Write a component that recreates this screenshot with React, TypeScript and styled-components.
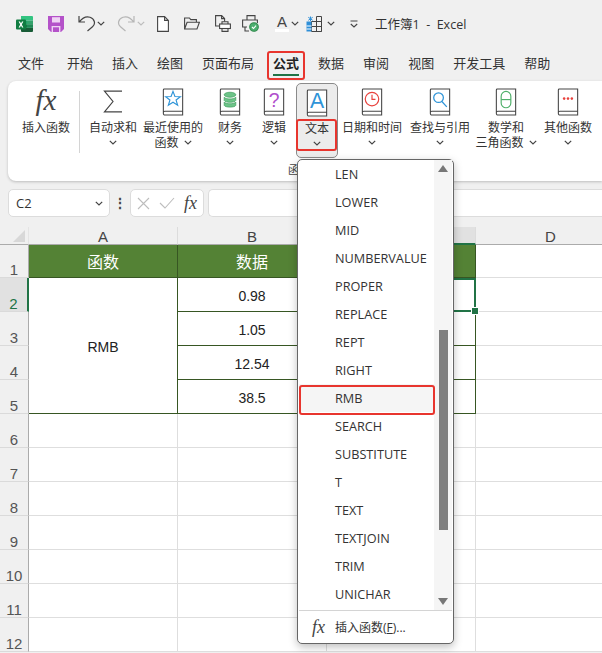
import React from 'react'
import styled, { createGlobalStyle } from 'styled-components'

const UI = `"Open Sans", "Noto Sans CJK SC", sans-serif`

const GlobalStyle = createGlobalStyle`
  html, body { margin: 0; padding: 0; background: #f0f0f0; }
  * { box-sizing: border-box; }
`

const Chevron = ({ color = '#444' }: { color?: string }) => (
	<svg width="8" height="5" viewBox="0 0 8 5" fill="none" stroke={color} strokeWidth="1.2"><path d="M.8.8 4 4 7.2.8" /></svg>
)

const Book = ({ children }: { children: React.ReactNode }) => (
	<svg width="22" height="28" viewBox="0 0 22 29" fill="none">
		<path d="M1 25.5V2a1 1 0 0 1 1-1h19v27H2.5A1.5 1.5 0 0 1 1 26.5v-1A1.5 1.5 0 0 1 2.5 24H21" fill="#fff" stroke="#444" strokeWidth="1.1" />
		{children}
	</svg>
)

const tabs = ['文件', '开始', '插入', '绘图', '页面布局', '公式', '数据', '审阅', '视图', '开发工具', '帮助']

const ribbonItems: { icon: React.ReactNode; width: number; lines: string[]; chevronInline?: boolean }[] = [
	{
		width: 58,
		lines: ['自动求和'],
		icon: <svg width="20" height="27" viewBox="0 -2 22 30" fill="none" stroke="#444" strokeWidth="1.3"><path d="M21 1.5H1.5L11 13 1.5 24.5H21" /></svg>,
	},
	{
		width: 62,
		lines: ['最近使用的', '函数'],
		chevronInline: true,
		icon: <Book><path d="M11 3.500l2 5.300 5.600.2-4.400 3.500 1.600 5.400-4.800-3.100-4.800 3.100 1.600-5.400L3.400 9l5.600-.2z" stroke="#2e94d8" strokeWidth="1.2" /></Book>,
	},
	{
		width: 52,
		lines: ['财务'],
		icon: <Book><g fill="#6cc488" stroke="#3b9a5a" strokeWidth=".7"><ellipse cx="11" cy="7" rx="6" ry="2.6" /><path d="M5 9.5c1 2.4 11 2.4 12 0V13c-1 2.4-11 2.4-12 0z" /><path d="M5 14.5c1 2.4 11 2.4 12 0V18c-1 2.4-11 2.4-12 0z" /></g></Book>,
	},
	{
		width: 36,
		lines: ['逻辑'],
		icon: <Book><text x="11" y="20" textAnchor="middle" fontSize="20" fontFamily="Liberation Sans, sans-serif" fill="#b04fcc">?</text></Book>,
	},
]

const ribbonItemsRight: typeof ribbonItems = [
	{
		width: 68,
		lines: ['日期和时间'],
		icon: <Book><g stroke="#e8413c" strokeWidth="1.2"><circle cx="11" cy="11.5" r="7" /><path d="M11 7v4.7h3.6" /></g></Book>,
	},
	{
		width: 68,
		lines: ['查找与引用'],
		icon: <Book><g stroke="#2e94d8" strokeWidth="1.3"><circle cx="9.5" cy="10" r="5" /><path d="M13 14l5 5.5" /></g></Book>,
	},
	{
		width: 64,
		lines: ['数学和', '三角函数'],
		chevronInline: true,
		icon: <Book><g stroke="#4fb06a" strokeWidth="1.2"><rect x="6" y="3.5" width="10" height="17" rx="5" /><path d="M6 12h10" /></g></Book>,
	},
	{
		width: 60,
		lines: ['其他函数'],
		icon: <Book><g fill="#e8413c"><circle cx="7" cy="11" r="1.3" /><circle cx="11" cy="11" r="1.3" /><circle cx="15" cy="11" r="1.3" /></g></Book>,
	},
]

const functions = ['LEN', 'LOWER', 'MID', 'NUMBERVALUE', 'PROPER', 'REPLACE', 'REPT', 'RIGHT', 'RMB', 'SEARCH', 'SUBSTITUTE', 'T', 'TEXT', 'TEXTJOIN', 'TRIM', 'UNICHAR']

const values = ['0.98', '1.05', '12.54', '38.5']

const RibbonButton = ({ item }: { item: (typeof ribbonItems)[number] }) => (
	<ToolButton $width={item.width}>
		<IconBox>{item.icon}</IconBox>
		{item.lines.map((line, i) => (
			<ToolLabel key={line}>
				{line}
				{item.chevronInline && i === 1 && <InlineChevron><Chevron /></InlineChevron>}
			</ToolLabel>
		))}
		{!item.chevronInline && <ChevronRow><Chevron /></ChevronRow>}
	</ToolButton>
)

const App = () => {
	return (
		<Page>
			<GlobalStyle />
			<TitleBar>
				<Slot $left={16} $width={17}>
					<svg width="17" height="16" viewBox="0 0 17 16">
						<path d="M5 0h11a1 1 0 0 1 1 1v3.5H5z" fill="#33c481" />
						<path d="M5 4.5h6v3.7H5z" fill="#21a366" />
						<path d="M11 4.5h6v3.7h-6z" fill="#33a36c" />
						<path d="M5 8.2h6v3.7H5z" fill="#107c41" />
						<path d="M11 8.2h6v3.7h-6z" fill="#1f8a55" />
						<path d="M5 11.9h12V15a1 1 0 0 1-1 1H6a1 1 0 0 1-1-1z" fill="#185c37" />
						<rect y="3.5" width="10" height="10" rx="1" fill="#107c41" />
						<path d="M2.6 5.5h1.4L5 7.4l1-1.9h1.4L5.8 8.5l1.6 3H6L5 9.5l-1 2H2.6l1.6-3z" fill="#fff" />
					</svg>
				</Slot>
				<Slot $left={15} $width={16}>
					<svg width="16" height="16" viewBox="0 0 16 16">
						<path d="M0 0h16v13l-3 3H3l-3-3z" fill="#b452c9" />
						<path d="M4 1.2h8v5.3H4z" fill="#efd3f4" />
						<path d="M3.6 10h8.8v6H3.6z" fill="#efd3f4" />
						<path d="M5 11.3h6v4.7H5z" fill="#b452c9" />
					</svg>
				</Slot>
				<Slot $left={14} $width={18}>
					<svg width="18" height="17" viewBox="0 0 18 17" fill="none" stroke="#444" strokeWidth="1.2"><path d="M1 1v6h6M1.3 6.8C4 3.4 8 1 12 2.3c4.6 1.6 6 6.500 2.500 9.500L9.500 16" /></svg>
				</Slot>
				<Slot $left={1} $width={8}><Chevron /></Slot>
				<Slot $left={12} $width={18}>
					<svg width="18" height="17" viewBox="0 0 18 17" fill="none" stroke="#b5b5b5" strokeWidth="1.2"><path d="M17 1v6h-6M16.700 6.800C14 3.400 10 1 6 2.300 1.400 3.900 0 8.800 3.500 11.800L8.500 16" /></svg>
				</Slot>
				<Slot $left={2} $width={8}><Chevron color="#bdbdbd" /></Slot>
				<Slot $left={12} $width={12}>
					<svg width="12" height="16" viewBox="0 0 12 16" fill="#fff" stroke="#444" strokeWidth="1.1"><path d="M.6.6h7l3.800 3.800v11H.6z M7.600.6v3.800h3.800" /></svg>
				</Slot>
				<Slot $left={15} $width={16}>
					<svg width="16" height="13" viewBox="0 0 16 13" fill="none" stroke="#444" strokeWidth="1.1"><path d="M.6 12V1h4.800l1.400 1.600h5.600v2.600M.6 12l2.500-6.800h12.300L13 12z" /></svg>
				</Slot>
				<Slot $left={15} $width={16}>
					<svg width="16" height="17" viewBox="0 0 16 17" fill="none" stroke="#444" strokeWidth="1.1"><path d="M4 11H.6V.6h6l3 3v3" /><path d="M6.600.6v3h3" /><rect x="4.600" y="9" width="10.800" height="4.500" fill="#fff" /><path d="M7 9V6.800h6V9M7 13v3.400h6V13" /></svg>
				</Slot>
				<Slot $left={11} $width={17}>
					<svg width="17" height="17" viewBox="0 0 17 17" fill="none" stroke="#444" strokeWidth="1.1"><path d="M5 5V.6h8V5" /><path d="M5 12H.6V5h14.800v3" /><path d="M3 12v4h4" /><circle cx="12" cy="12" r="4.300" fill="#4caf6f" stroke="#2f8a4c" /><path d="M10 12l1.500 1.500 2.500-2.800" stroke="#fff" /></svg>
				</Slot>
				<Slot $left={16} $width={14}>
					<FontSwatch>A</FontSwatch>
				</Slot>
				<Slot $left={2} $width={8}><Chevron /></Slot>
				<Slot $left={7} $width={16}>
					<svg width="16" height="16" viewBox="0 0 16 16">
						<g fill="none" stroke="#444" strokeWidth="1"><path d="M5.500 5.500h10v10h-10zM10.500 .5h5v15M10.500 .5v15M5.500 10.500h10" /></g>
						<path d="M.5 5.500h5v10h-5z" fill="#2e8fd8" />
						<path d="M.5 10h5M.5 13h5" stroke="#fff" />
						<path d="M4.500 .5v4.500M2.300 1.300 6.700 4.300M6.700 1.300 2.300 4.300" stroke="#2e8fd8" strokeWidth="1" />
					</svg>
				</Slot>
				<Slot $left={5} $width={8}><Chevron /></Slot>
				<Slot $left={15} $width={8}>
					<svg width="8" height="8" viewBox="0 0 8 8" fill="none" stroke="#444" strokeWidth="1.1"><path d="M.5 1h7M.8 4 4 7 7.200 4" /></svg>
				</Slot>
				<Title>工作簿1&nbsp; -&nbsp; Excel</Title>
			</TitleBar>

			<TabBar>
				{tabs.map((tab) => (
					<Tab key={tab} $active={tab === '公式'}>{tab}</Tab>
				))}
			</TabBar>

			<Ribbon>
				<ToolRow>
					<ToolButton $width={60}>
						<FxIcon>fx</FxIcon>
						<ToolLabel>插入函数</ToolLabel>
					</ToolButton>
					<RibbonDivider />
					{ribbonItems.map((item) => <RibbonButton key={item.lines[0]} item={item} />)}
					<TextButton>
						<IconBox>
							<Book><text x="11" y="19.500" textAnchor="middle" fontSize="22" fontFamily="Liberation Sans, sans-serif" fill="#2e94d8">A</text></Book>
						</IconBox>
						<ToolLabel>文本</ToolLabel>
						<ChevronRow><Chevron /></ChevronRow>
						<TextButtonFrame />
					</TextButton>
					{ribbonItemsRight.map((item) => <RibbonButton key={item.lines[0]} item={item} />)}
				</ToolRow>
				<GroupLabel>函数库</GroupLabel>
			</Ribbon>

			<FormulaBar>
				<NameBox>C2<Chevron /></NameBox>
				<Grip>⋮</Grip>
				<FormulaActions>
					<svg width="13" height="13" viewBox="0 0 13 13" fill="none" stroke="#bdbdbd" strokeWidth="1.100"><path d="M1 1l11 11M12 1L1 12" /></svg>
					<svg width="16" height="12" viewBox="0 0 16 12" fill="none" stroke="#bdbdbd" strokeWidth="1.100"><path d="M1 6l5 5L15 1" /></svg>
					<SmallFx>fx</SmallFx>
				</FormulaActions>
				<FormulaInput />
			</FormulaBar>

			<Sheet>
				<Corner><CornerMark /></Corner>
				<ColumnHead>A</ColumnHead>
				<ColumnHead>B</ColumnHead>
				<ColumnHead $active />
				<ColumnHead $last>D</ColumnHead>

				<RowHead>1</RowHead>
				<HeadCell>函数</HeadCell>
				<HeadCell>数据</HeadCell>
				<HeadCell />
				<BlankCell $last />

				<RowHead $active>2</RowHead>
				<MergedCell>RMB</MergedCell>
				<DataCell>{values[0]}</DataCell>
				<SelectedCell><FillHandle /></SelectedCell>
				<BlankCell $last />

				{values.slice(1).map((value, i) => (
					<React.Fragment key={value}>
						<RowHead style={{ gridRow: i + 4 }}>{i + 3}</RowHead>
						<DataCell>{value}</DataCell>
						<DataCell />
						<BlankCell $last />
					</React.Fragment>
				))}

				{[6, 7, 8, 9, 10, 11, 12].map((row) => (
					<React.Fragment key={row}>
						<RowHead>{row}</RowHead>
						<BlankCell />
						<BlankCell />
						<BlankCell />
						<BlankCell $last />
					</React.Fragment>
				))}
			</Sheet>

			<Menu>
				<MenuBody>
					<MenuList>
						{functions.map((name) => (
							<MenuItem key={name} $selected={name === 'RMB'}>{name}</MenuItem>
						))}
					</MenuList>
					<Scrollbar>
						<ScrollArrow $up />
						<ScrollThumb />
						<ScrollArrow />
					</Scrollbar>
				</MenuBody>
				<MenuFooter>
					<FooterFx>fx</FooterFx>
					<span>插入函数(<u>F</u>)...</span>
				</MenuFooter>
			</Menu>
		</Page>
	)
}

const Page = styled.div`
  position: relative;
  width: 602px;
  height: 653px;
  overflow: hidden;
  background: #f0f0f0;
  font-family: ${UI};
  color: #333;
`

const TitleBar = styled.div`
  height: 47px;
  display: flex;
  align-items: center;
`

const Slot = styled.div<{ $left: number; $width: number }>`
  width: ${props => props.$width}px;
  margin-left: ${props => props.$left}px;
  flex-shrink: 0;
  display: flex;
  align-items: center;
  justify-content: center;
`

const FontSwatch = styled.div`
  width: 14px;
  height: 17px;
  font: 15px/14px "Liberation Sans", sans-serif;
  color: #444;
  text-align: center;
  border-bottom: 3px solid #fff;
`

const Title = styled.div`
  margin-left: 17px;
  font-size: 12.5px;
  white-space: nowrap;
  color: #333;
`

const TabBar = styled.div`
  height: 34px;
  display: flex;
  gap: 19px;
  padding-left: 18px;
`

const Tab = styled.div<{ $active?: boolean }>`
  position: relative;
  font-size: 13px;
  line-height: 32px;
  font-weight: ${props => (props.$active ? 700 : 400)};
  color: ${props => (props.$active ? '#222' : '#333')};

  &:first-child {
    margin-right: 4px;
  }

  ${props => props.$active && `
    &::before {
      content: '';
      position: absolute;
      left: 0;
      right: 0;
      bottom: 5px;
      height: 2px;
      background: #217346;
    }
    &::after {
      content: '';
      position: absolute;
      left: -6px;
      right: -6px;
      top: 4px;
      bottom: 1px;
      border: 2px solid #e8352e;
      border-radius: 3px;
    }
  `}
`

const Ribbon = styled.div`
  height: 100px;
  margin-left: 8px;
  background: #fff;
  border-radius: 8px 0 0 8px;
  box-shadow: 0 1px 3px rgba(0, 0, 0, 0.22);
  padding: 2px 0 0 8px;
  display: flex;
  flex-direction: column;
`

const ToolRow = styled.div`
  display: flex;
  align-items: flex-start;
  height: 80px;
`

const ToolButton = styled.div<{ $width: number }>`
  width: ${props => props.$width}px;
  flex-shrink: 0;
  display: flex;
  flex-direction: column;
  align-items: center;
`

const IconBox = styled.div`
  height: 37px;
  padding-top: 5px;
  display: flex;
  align-items: flex-start;
  justify-content: center;
`

const FxIcon = styled.div`
  height: 37px;
  padding-top: 2px;
  font: italic 29px/30px "Liberation Serif", serif;
  color: #444;
`

const ToolLabel = styled.div`
  font-size: 12px;
  line-height: 15px;
  height: 15px;
  white-space: nowrap;
  color: #333;
`

const ChevronRow = styled.div`
  height: 14px;
  display: flex;
  align-items: center;
  justify-content: center;
`

const InlineChevron = styled.span`
  display: inline-block;
  margin-left: 5px;
  line-height: 0;
  vertical-align: 2px;
`

const RibbonDivider = styled.div`
  width: 1px;
  height: 62px;
  margin: 8px 4px 0 3px;
  background: #d4d4d4;
`

const TextButton = styled.div`
  position: relative;
  width: 42px;
  height: 75px;
  margin: 0 0 0 4px;
  flex-shrink: 0;
  display: flex;
  flex-direction: column;
  align-items: center;
  background: #ececec;
  border: 1px solid #8a8a8a;
  border-radius: 5px;
`

const TextButtonFrame = styled.div`
  position: absolute;
  left: -1px;
  top: 35px;
  width: 41px;
  height: 32px;
  border: 2px solid #e8352e;
  border-radius: 3px;
`

const GroupLabel = styled.div`
  font-size: 11px;
  line-height: 13px;
  padding-left: 272px;
  color: #444;
`

const FormulaBar = styled.div`
  height: 28px;
  margin: 8px 0 10px 8px;
  display: flex;
  align-items: stretch;
`

const NameBox = styled.div`
  width: 102px;
  background: #fff;
  border: 1px solid #dcdcdc;
  border-radius: 5px;
  padding: 0 6px 0 7px;
  display: flex;
  align-items: center;
  justify-content: space-between;
  font-size: 13px;
  color: #333;
`

const Grip = styled.div`
  width: 20px;
  text-align: center;
  line-height: 27px;
  font-size: 14px;
  font-weight: 700;
  color: #444;
`

const FormulaActions = styled.div`
  width: 74px;
  background: #fff;
  border: 1px solid #dcdcdc;
  border-radius: 5px;
  display: flex;
  align-items: center;
  gap: 9px;
  padding-left: 6px;
`

const SmallFx = styled.span`
  font: italic 18px/20px "Liberation Serif", serif;
  color: #444;
`

const FormulaInput = styled.div`
  flex: 1;
  margin-left: 4px;
  background: #fff;
  border: 1px solid #dcdcdc;
  border-right: 0;
  border-radius: 5px 0 0 5px;
`

const Sheet = styled.div`
  display: grid;
  grid-template-columns: 29px 149px 149px 149px 150px;
  grid-template-rows: 18px 33px repeat(11, 34px);
  font-size: 12px;
  background: #fff;
`

const Corner = styled.div`
  background: #f0f0f0;
  border-right: 1px solid #e4e4e4;
  border-bottom: 1px solid #ababab;
  position: relative;
`

const CornerMark = styled.div`
  position: absolute;
  right: 3px;
  bottom: 2px;
  width: 12px;
  height: 12px;
  background: #d8d8d8;
  clip-path: polygon(100% 0, 100% 100%, 0 100%);
`

const ColumnHead = styled.div<{ $active?: boolean; $last?: boolean }>`
  background: ${props => (props.$active ? '#e1e1e1' : '#f0f0f0')};
  border-right: 1px solid ${props => (props.$last ? 'transparent' : '#dcdcdc')};
  border-bottom: ${props => (props.$active ? '2px solid #217346' : '1px solid #ababab')};
  text-align: center;
  font: 15px/19px "Liberation Sans", sans-serif;
  color: #444;
`

const RowHead = styled.div<{ $active?: boolean }>`
  grid-column: 1;
  background: ${props => (props.$active ? '#e1e1e1' : '#f0f0f0')};
  border-right: ${props => (props.$active ? '2px solid #217346' : '1px solid #ababab')};
  border-bottom: 1px solid #dadada;
  display: flex;
  align-items: flex-end;
  justify-content: center;
  font: 15px/14px "Liberation Sans", sans-serif;
  color: ${props => (props.$active ? '#217346' : '#555')};
`

const HeadCell = styled.div`
  background: #548235;
  border-right: 1px solid #375623;
  border-bottom: 1px solid #375623;
  color: #fff;
  font-size: 16px;
  display: flex;
  align-items: center;
  justify-content: center;
`

const DataCell = styled.div`
  border-right: 1px solid #375623;
  border-bottom: 1px solid #375623;
  color: #222;
  font: 14px "Liberation Sans", sans-serif;
  padding-top: 3px;
  display: flex;
  align-items: center;
  justify-content: center;
`

const MergedCell = styled(DataCell)`
  grid-row: 3 / span 4;
  grid-column: 2;
`

const SelectedCell = styled.div`
  position: relative;
  border: 2px solid #217346;
  background: #fff;
`

const FillHandle = styled.div`
  position: absolute;
  right: -4px;
  bottom: -4px;
  width: 6px;
  height: 6px;
  background: #217346;
  border: 1px solid #fff;
  box-sizing: content-box;
  margin: -1px;
`

const BlankCell = styled.div<{ $last?: boolean }>`
  border-right: ${props => (props.$last ? '0' : '1px solid #dedede')};
  border-bottom: 1px solid #dedede;
`

const Menu = styled.div`
  position: absolute;
  left: 297px;
  top: 159px;
  width: 157px;
  height: 485px;
  background: #fff;
  border: 1px solid #666;
  border-radius: 5px;
  box-shadow: 0 3px 8px rgba(0, 0, 0, 0.25);
  display: flex;
  flex-direction: column;
`

const MenuBody = styled.div`
  display: flex;
  height: 451px;
  border-bottom: 1px solid #d4d4d4;
  margin: 0 1px;
`

const MenuList = styled.div`
  flex: 1;
`

const MenuItem = styled.div<{ $selected?: boolean }>`
  position: relative;
  height: 28px;
  line-height: 28px;
  padding-left: 36px;
  font-size: 12.7px;
  color: #333;
  background: ${props => (props.$selected ? '#f5f5f5' : 'transparent')};

  ${props => props.$selected && `
    &::after {
      content: '';
      position: absolute;
      left: 0;
      right: -1px;
      top: 1px;
      bottom: -3px;
      border: 2px solid #e8352e;
      border-radius: 3px;
    }
  `}
`

const Scrollbar = styled.div`
  width: 18px;
  background: #f5f5f5;
  display: flex;
  flex-direction: column;
  align-items: center;
  padding: 5px 0 5px;
`

const ScrollArrow = styled.div<{ $up?: boolean }>`
  width: 10px;
  height: 7px;
  background: #777;
  clip-path: ${props => (props.$up ? 'polygon(50% 0, 100% 100%, 0 100%)' : 'polygon(0 0, 100% 0, 50% 100%)')};
  margin-top: ${props => (props.$up ? '0' : 'auto')};
`

const ScrollThumb = styled.div`
  width: 9px;
  height: 200px;
  margin-top: 158px;
  background: #7f7f7f;
`

const MenuFooter = styled.div`
  flex: 1;
  display: flex;
  align-items: center;
  padding-left: 14px;
  font-size: 12px;
  color: #333;
`

const FooterFx = styled.span`
  width: 23px;
  font: italic 18px/20px "Liberation Serif", serif;
  color: #444;
`

export default App
